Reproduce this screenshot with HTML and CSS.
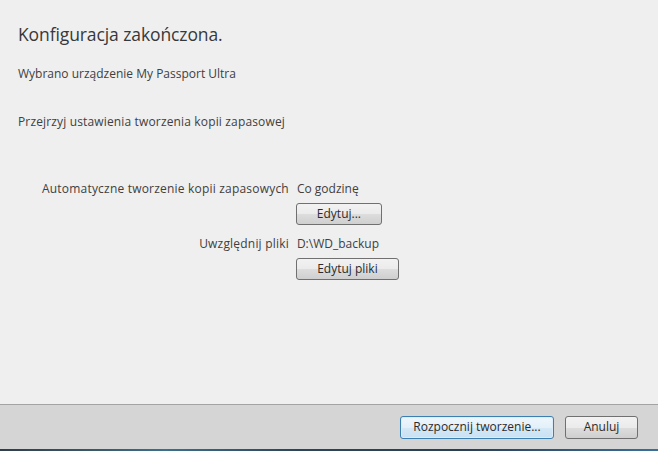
FILE: index.html
```html
<!DOCTYPE html>
<html lang="pl">
<head>
<meta charset="utf-8">
<link rel="stylesheet" href="styles.css">
</head>
<body>
<div class="window">
  <main class="content">
    <h1 class="title">Konfiguracja zakończona.</h1>
    <p class="line line-device">Wybrano urządzenie My Passport Ultra</p>
    <p class="line line-review">Przejrzyj ustawienia tworzenia kopii zapasowej</p>
    <div class="settings">
      <div class="label">Automatyczne tworzenie kopii zapasowych</div>
      <div class="value">
        <span class="value-text">Co godzinę</span>
        <button class="btn btn-edit">Edytuj...</button>
      </div>
      <div class="label">Uwzględnij pliki</div>
      <div class="value">
        <span class="value-text">D:\WD_backup</span>
        <button class="btn btn-files">Edytuj pliki</button>
      </div>
    </div>
  </main>
  <footer class="footer">
    <button class="btn btn-default btn-start">Rozpocznij tworzenie...</button>
    <button class="btn btn-cancel">Anuluj</button>
  </footer>
  <div class="taskbar-edge"></div>
</div>
</body>
</html>
```
FILE: styles.css
```css
html, body {
  margin: 0;
  padding: 0;
  height: 100%;
}
body {
  background: #efefef;
  font-family: "Open Sans", "Noto Sans", "DejaVu Sans", sans-serif;
  color: #404040;
  font-size: 12px;
  overflow: hidden;
}
.window {
  display: flex;
  flex-direction: column;
  height: 451px;
}
.content {
  flex: 1;
  padding: 22px 0 0 18px;
}
.title {
  margin: 0;
  font-weight: 400;
  font-size: 17.5px;
  line-height: 24px;
  color: #383838;
  letter-spacing: -0.1px;
}
.line {
  margin: 0;
  line-height: 16px;
}
.line-device {
  margin-top: 20px;
}
.line-review {
  margin-top: 32px;
  letter-spacing: 0.15px;
}
.settings {
  display: grid;
  grid-template-columns: auto auto;
  justify-content: start;
  column-gap: 8px;
  row-gap: 11px;
  margin: 51px 0 0 24px;
}
.label {
  text-align: right;
  line-height: 16px;
  letter-spacing: 0.2px;
}
.value {
  display: flex;
  flex-direction: column;
  align-items: flex-start;
  gap: 6px;
}
.value-text {
  line-height: 16px;
}
.btn {
  font-family: inherit;
  font-size: 12px;
  color: #2b2b2b;
  height: 22px;
  padding: 0 8px;
  border: 1px solid #707070;
  border-radius: 3px;
  background: linear-gradient(#f2f2f2 0%, #ebebeb 50%, #dddddd 51%, #cfcfcf 100%);
  margin: 0;
  line-height: 18px;
}
.btn-edit {
  width: 86px;
  margin-left: -1px;
}
.btn-files {
  width: 103px;
  margin-left: -1px;
}
.footer {
  border-top: 1px solid #a3a3a3;
  background: #d5d5d5;
  display: flex;
  justify-content: flex-end;
  align-items: center;
  gap: 11px;
  padding-right: 20px;
  box-sizing: border-box;
  height: 45px;
}
.btn-start {
  width: 154px;
  height: 23px;
}
.btn-default {
  border-color: #3c7fb1;
  box-shadow: inset 0 0 0 1px #dcecf8;
  background: linear-gradient(#eef6fc 0%, #e3f0fa 50%, #d4e8f6 51%, #c9e1f3 100%);
}
.btn-cancel {
  width: 73px;
  height: 23px;
}
.taskbar-edge {
  height: 2px;
  background: linear-gradient(90deg, #2f3d4b 0%, #3a5a6a 15%, #3b6f8c 25%, #2d4558 45%, #2a3f52 70%, #3a6f98 100%);
}
```
